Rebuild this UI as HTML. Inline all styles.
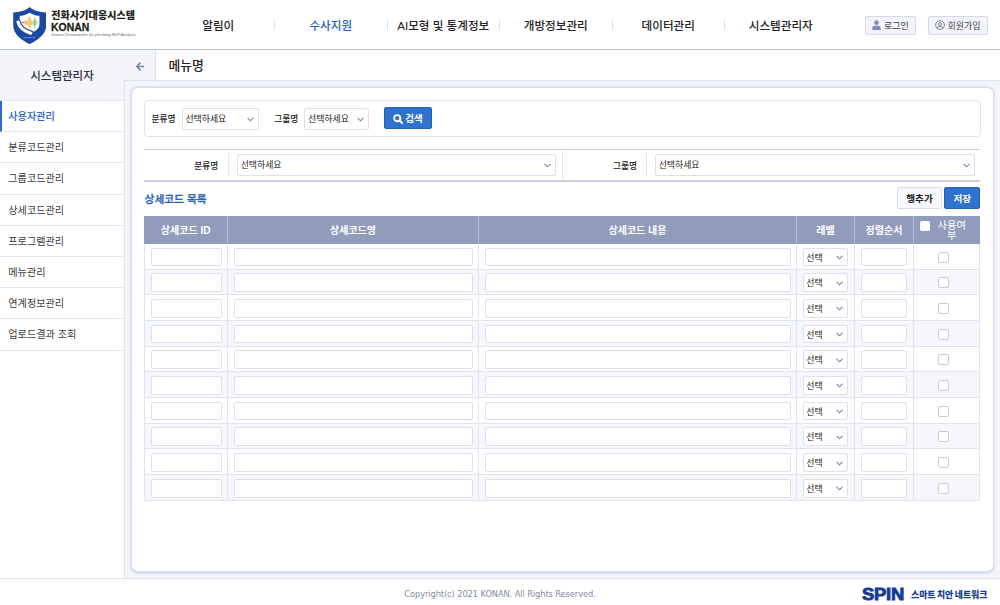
<!DOCTYPE html>
<html lang="ko">
<head>
<meta charset="utf-8">
<title>KONAN</title>
<style>
*{box-sizing:border-box;margin:0;padding:0}
html,body{width:1000px;height:605px;overflow:hidden;background:#fff}
body{position:relative;font-family:"Liberation Sans","Noto Sans CJK KR",sans-serif;font-size:12px;color:#222}
body,div,span{font-family:"Liberation Sans","Noto Sans CJK KR",sans-serif}
.abs{position:absolute}
#hdr{position:absolute;left:0;top:0;width:1000px;height:50px;background:#fff;border-bottom:1px solid #b9c0d8}
.lt1{position:absolute;left:51.3px;top:7.8px;font-size:10px;font-weight:900;color:#231f20;line-height:15.80px;white-space:nowrap;letter-spacing:0.12px}
.lt2{position:absolute;left:51px;top:20.3px;font-size:11px;font-weight:700;color:#231f20;line-height:14px;font-family:"Liberation Sans",sans-serif;transform-origin:0 0;transform:scaleX(.95);-webkit-text-stroke:0.3px #231f20}
.lt3{position:absolute;left:51.5px;top:32px;font-size:4.14px;color:#666;line-height:6px;white-space:nowrap;font-family:"Liberation Sans",sans-serif;font-style:italic;transform-origin:0 0}
.nav{position:absolute;top:1px;height:49px;line-height:50.09px;text-align:center;font-size:11.6px;font-weight:500;color:#222;width:112.5px;white-space:nowrap}
.nav.on{color:#2861bc}
.sep{position:absolute;top:19px;width:1px;height:11px;background:#dde0ea}
.hbtn{position:absolute;top:16px;height:18.8px;border:1px solid #d5d9ea;background:#f3f4fb;border-radius:2px;font-size:9px;line-height:18.62px;color:#444;white-space:nowrap}
.ic{position:absolute}
#side{position:absolute;left:0;top:50px;width:125px;height:528px;background:#fff;border-right:1px solid #dfe2ee}
#sidet{position:absolute;left:0;top:50px;width:155px;height:51px;background:#f4f5fb;border-bottom:1px solid #e4e6f0}
.st{position:absolute;left:0;top:0.8px;width:124px;height:49px;line-height:51.07px;text-align:center;font-size:11.5px;font-weight:500;color:#2a2d3e}
#tbar{position:absolute;left:155px;top:50px;width:845px;height:31px;background:#fff;border-bottom:1px solid #dfe2f0}
.tt{position:absolute;left:13.5px;top:0;line-height:32.30px;font-size:12.8px;font-weight:500;color:#222}
.mi{position:absolute;left:0;width:124px;height:31.2px;border-bottom:1px solid #e4e6f0;line-height:32.33px;padding-left:8.3px;font-size:10.15px;color:#3c3c3c;background:#fff;white-space:nowrap}
.mi.on{color:#2861bc;border-left:2px solid #2f6bc6;padding-left:6.3px;font-weight:500}
#cont{position:absolute;left:124px;top:81px;width:876px;height:497px;background:#f4f5fb;border-left:1px solid #dfe2ee}
#card{position:absolute;left:131px;top:87px;width:863px;height:485px;background:#fff;border:1px solid #d9dcec;border-radius:7px;box-shadow:0 0.5px 2.5px rgba(150,160,205,.55)}
#sbox{position:absolute;left:144px;top:100px;width:837px;height:37px;border:1px solid #dfe2ee;border-radius:4px;background:#fff}
#frow{position:absolute;left:144.3px;top:149.3px;width:835.9px;height:32.6px;border-top:1px solid #c9cee0;border-bottom:2px solid #c9cee0;background:#fff}
.fsep{position:absolute;top:3px;width:1px;height:23px;background:#e4e6f0}
.sel{position:absolute;background:#fff;border:1px solid #dcdfee;border-radius:2px;font-size:8.9px;color:#222;white-space:nowrap}
.inp{position:absolute;background:#fff;border:1px solid #dcdfee;border-radius:2px}
.lab{position:absolute;font-size:8.7px;font-weight:500;color:#222;white-space:nowrap;line-height:17.57px}
.chev{position:absolute;right:4.2px;top:50%;margin-top:-2px}
.btnb{position:absolute;background:#2e73cc;border:1px solid #2462b4;border-radius:2px;color:#fff;font-size:10px;font-weight:500;line-height:21.80px;white-space:nowrap}
.btnw{position:absolute;background:#f7f8fc;border:1px solid #d9dcec;border-radius:2px;color:#222;font-size:9.6px;font-weight:700;line-height:21.33px;text-align:center;white-space:nowrap}
.h2{position:absolute;left:144.6px;top:189.5px;font-size:10.7px;font-weight:500;-webkit-text-stroke:0.3px #2861bc;color:#2861bc;line-height:19.93px;white-space:nowrap}
.th{position:absolute;top:216px;height:27.7px;background:#919cbd;color:#fff;font-size:10px;font-weight:700;text-align:center;line-height:29.80px;border-right:1px solid #b5bcd3;white-space:nowrap}
.row{position:absolute;left:144.3px;width:835.9px;height:25.7px;border-bottom:1px solid #e1e4f0;background:#fff}
.row.alt{background:#f6f7fc}
.vl{position:absolute;top:243.9px;width:1px;height:257.4px;background:#e1e4f0}
.cb{position:absolute;width:11px;height:11px;border:1px solid #c9cbd3;border-radius:2px;background:#fff}
.cbh{position:absolute;left:6.2px;top:4.5px;width:10px;height:10px;border-radius:2px;background:#fff}
.use1{position:absolute;left:23.5px;top:2.3px;line-height:15.85px;font-size:10.3px;font-weight:400}
.use2{position:absolute;left:22.8px;top:12.2px;width:30px;text-align:center;line-height:15.85px;font-size:10.3px;font-weight:400}
#foot{position:absolute;left:0;top:578px;width:1000px;height:27px;background:#fff;border-top:1px solid #e1e4f0}
.cp{position:absolute;left:0;top:0;width:1000px;text-align:center;font-size:8.3px;color:#858aa0;line-height:30px;font-family:"DejaVu Sans","Liberation Sans",sans-serif;letter-spacing:-0.1px}
.spin{position:absolute;left:862.2px;top:3.9px;font-size:17.2px;font-weight:700;color:#173b95;line-height:22px;font-family:"Liberation Sans",sans-serif;letter-spacing:-0.2px;transform-origin:0 0;transform:scaleX(1.07);-webkit-text-stroke:0.9px #173b95}
.spk{position:absolute;left:910.8px;top:8.3px;font-size:9.5px;font-weight:900;color:#173b95;line-height:15.71px;white-space:nowrap;word-spacing:-1px;transform-origin:0 0;transform:scaleX(.932)}
</style>
</head>
<body>
<div id="hdr">
<svg class="abs" style="left:12.7px;top:6.6px" width="33.3" height="37.1" viewBox="62 60 438 488"><path d="M280 60 C232 104 140 133 65 131 L65 300 C65 420 180 500 280 548 C380 500 500 420 500 300 L500 131 C420 133 328 104 280 60Z" fill="#1b48a1"/><path d="M280 135 C240 160 190 176 150 176 L150 290 C150 345 210 385 280 412 C350 385 410 345 410 290 L410 176 C370 176 320 160 280 135Z" fill="#fff"/><path d="M128 258 Q158 362 296 406" fill="none" stroke="#1b48a1" stroke-width="74" stroke-linecap="round"/><path d="M128 258 Q158 362 296 406" fill="none" stroke="#fff" stroke-width="42" stroke-linecap="round"/><g stroke-linecap="round" fill="none"><path d="M190 265 H212" stroke="#e8383d" stroke-width="14"/><path d="M224 238 V292 M236 252 V278" stroke="#f08a2a" stroke-width="10"/><path d="M252 235 V295 M265 212 V318 M279 188 V338 M293 212 V318" stroke="#f6b62e" stroke-width="10"/><path d="M307 240 V290 M320 254 V276" stroke="#c9c544" stroke-width="10"/><path d="M336 230 V300 M350 198 V332 M364 235 V295" stroke="#59b55a" stroke-width="10"/><path d="M378 254 V276 M392 260 V270" stroke="#a9dba6" stroke-width="10"/></g><text x="280" y="474" text-anchor="middle" font-family="Liberation Sans, sans-serif" font-weight="700" font-size="26" letter-spacing="12" fill="#fff">KONAN</text></svg>

<div class="lt1">전화사기대응시스템</div><div class="lt2">KONAN</div><div class="lt3">Konan Overwatcher for phishing NLP Analysis</div>
<div class="nav" style="left:162.0px">알림이</div>
<div class="nav on" style="left:274.5px">수사지원</div>
<div class="sep" style="left:274.0px"></div>
<div class="nav" style="left:387.0px">AI모형 및 통계정보</div>
<div class="sep" style="left:386.5px"></div>
<div class="nav" style="left:499.5px">개방정보관리</div>
<div class="sep" style="left:499.0px"></div>
<div class="nav" style="left:612.0px">데이터관리</div>
<div class="sep" style="left:611.5px"></div>
<div class="nav" style="left:724.5px">시스템관리자</div>
<div class="sep" style="left:724.0px"></div>
<div class="hbtn" style="left:865px;width:51px"><svg class="ic" style="left:6px;top:2.8px" width="9" height="10.4" viewBox="0 0 9 10" preserveAspectRatio="none"><circle cx="4.5" cy="2.6" r="2.3" fill="#7f8bb3"/><path d="M0.3 9.6 V8 Q0.3 5.6 2.6 5.6 H6.4 Q8.7 5.6 8.7 8 V9.6 Z" fill="#7f8bb3"/></svg><span style="position:absolute;left:18px;top:0">로그인</span></div>
<div class="hbtn" style="left:928px;width:60px"><svg class="ic" style="left:5.7px;top:3px" width="10" height="10" viewBox="0 0 10 10"><circle cx="5" cy="5" r="4.4" fill="none" stroke="#666e8a" stroke-width="0.8"/><circle cx="5" cy="4" r="1.5" fill="none" stroke="#666e8a" stroke-width="0.8"/><path d="M2.3 8.2 Q2.6 6.3 5 6.3 Q7.4 6.3 7.7 8.2" fill="none" stroke="#666e8a" stroke-width="0.8"/></svg><span style="position:absolute;left:18.5px;top:0">회원가입</span></div>
</div>
<div id="side"></div>
<div id="sidet"><div class="st">시스템관리자</div><svg class="abs" style="left:136px;top:12px" width="9" height="9" viewBox="0 0 9 9"><path d="M4.4 0.6 L0.9 4.5 L4.4 8.4 M1 4.5 H8.1" fill="none" stroke="#7785ad" stroke-width="1.7"/></svg></div>
<div id="tbar"><div class="tt">메뉴명</div></div>
<div class="abs" style="left:155px;top:50px;width:1px;height:31px;background:#dcdfee"></div><div class="abs" style="left:124px;top:80px;width:32px;height:1px;background:#dcdfee"></div>
<div class="mi on" style="top:101.0px">사용자관리</div>
<div class="mi" style="top:132.2px">분류코드관리</div>
<div class="mi" style="top:163.4px">그룹코드관리</div>
<div class="mi" style="top:194.6px">상세코드관리</div>
<div class="mi" style="top:225.8px">프로그램관리</div>
<div class="mi" style="top:257.0px">메뉴관리</div>
<div class="mi" style="top:288.2px">연계정보관리</div>
<div class="mi" style="top:319.4px">업로드결과 조회</div>
<div id="cont"></div>
<div id="card"></div>
<div id="sbox">
<div class="lab" style="left:6.6px;top:9.7px">분류명</div>
<div class="sel" style="left:36.8px;top:7.2px;width:77.4px;height:21.4px;line-height:21.1px;padding-left:2.6px">선택하세요<svg class="chev" width="7" height="5" viewBox="0 0 7 5"><path d="M0.6 0.8 L3.5 3.8 L6.4 0.8" fill="none" stroke="#7a82a4" stroke-width="1.1"/></svg></div>
<div class="lab" style="left:129.2px;top:9.7px">그룹명</div>
<div class="sel" style="left:159.4px;top:7.2px;width:64.4px;height:21.4px;line-height:21.1px;padding-left:2.6px">선택하세요<svg class="chev" width="7" height="5" viewBox="0 0 7 5"><path d="M0.6 0.8 L3.5 3.8 L6.4 0.8" fill="none" stroke="#7a82a4" stroke-width="1.1"/></svg></div>
<div class="btnb" style="left:238.7px;top:6.2px;width:48.3px;height:22.3px"><svg class="abs" style="left:8.2px;top:6px" width="10" height="10" viewBox="0 0 10 10"><circle cx="4.2" cy="4.2" r="3.1" fill="none" stroke="#fff" stroke-width="1.9"/><path d="M6.5 6.5 L9.2 9.2" stroke="#fff" stroke-width="1.9" stroke-linecap="round"/></svg><span style="position:absolute;left:20.6px;top:0;font-size:9.5px;font-weight:700">검색</span></div>
</div>
<div id="frow">
<div class="lab" style="left:50px;top:7.6px">분류명</div>
<div class="fsep" style="left:83.6px"></div>
<div class="sel" style="left:92.6px;top:4px;width:319.4px;height:21.6px;line-height:21.1px;padding-left:2.8px">선택하세요<svg class="chev" width="7" height="5" viewBox="0 0 7 5"><path d="M0.6 0.8 L3.5 3.8 L6.4 0.8" fill="none" stroke="#7a82a4" stroke-width="1.1"/></svg></div>
<div class="fsep" style="left:418px;top:0;height:30px"></div>
<div class="lab" style="left:468.6px;top:7.6px">그룹명</div>
<div class="fsep" style="left:502px"></div>
<div class="sel" style="left:510.6px;top:4px;width:320px;height:21.6px;line-height:21.1px;padding-left:2.8px">선택하세요<svg class="chev" width="7" height="5" viewBox="0 0 7 5"><path d="M0.6 0.8 L3.5 3.8 L6.4 0.8" fill="none" stroke="#7a82a4" stroke-width="1.1"/></svg></div>
</div>
<div class="h2">상세코드 목록</div>
<div class="btnw" style="left:897px;top:187.4px;width:45px;height:21.6px">행추가</div>
<div class="btnb" style="left:944.2px;top:187.4px;width:36.2px;height:21.6px;text-align:center;font-weight:700;font-size:9.6px">저장</div>
<div class="th" style="left:144.3px;width:83.7px">상세코드 ID</div>
<div class="th" style="left:228.0px;width:251.0px">상세코드명</div>
<div class="th" style="left:479.0px;width:318.0px">상세코드 내용</div>
<div class="th" style="left:797.0px;width:58.0px">레벨</div>
<div class="th" style="left:855.0px;width:59.0px">정렬순서</div>
<div class="th" style="left:914.0px;width:66.2px;border-right:0"><span class="cbh"></span><span class="use1">사용여</span><span class="use2">부</span></div>
<div class="row" style="top:243.9px">
<div class="inp" style="left:7px;top:3.7px;width:70.6px;height:18.7px"></div>
<div class="inp" style="left:90px;top:3.7px;width:239px;height:18.7px"></div>
<div class="inp" style="left:341px;top:3.7px;width:306px;height:18.7px"></div>
<div class="sel" style="left:659px;top:3.7px;width:45px;height:18.7px;line-height:18.6px;padding-left:2px">선택<svg class="chev" width="7" height="5" viewBox="0 0 7 5"><path d="M0.6 0.8 L3.5 3.8 L6.4 0.8" fill="none" stroke="#7a82a4" stroke-width="1.1"/></svg></div>
<div class="inp" style="left:717px;top:3.7px;width:46px;height:18.7px"></div>
<div class="cb" style="left:794px;top:7.7px"></div>
</div>
<div class="row alt" style="top:269.6px">
<div class="inp" style="left:7px;top:3.7px;width:70.6px;height:18.7px"></div>
<div class="inp" style="left:90px;top:3.7px;width:239px;height:18.7px"></div>
<div class="inp" style="left:341px;top:3.7px;width:306px;height:18.7px"></div>
<div class="sel" style="left:659px;top:3.7px;width:45px;height:18.7px;line-height:18.6px;padding-left:2px">선택<svg class="chev" width="7" height="5" viewBox="0 0 7 5"><path d="M0.6 0.8 L3.5 3.8 L6.4 0.8" fill="none" stroke="#7a82a4" stroke-width="1.1"/></svg></div>
<div class="inp" style="left:717px;top:3.7px;width:46px;height:18.7px"></div>
<div class="cb" style="left:794px;top:7.7px"></div>
</div>
<div class="row" style="top:295.3px">
<div class="inp" style="left:7px;top:3.7px;width:70.6px;height:18.7px"></div>
<div class="inp" style="left:90px;top:3.7px;width:239px;height:18.7px"></div>
<div class="inp" style="left:341px;top:3.7px;width:306px;height:18.7px"></div>
<div class="sel" style="left:659px;top:3.7px;width:45px;height:18.7px;line-height:18.6px;padding-left:2px">선택<svg class="chev" width="7" height="5" viewBox="0 0 7 5"><path d="M0.6 0.8 L3.5 3.8 L6.4 0.8" fill="none" stroke="#7a82a4" stroke-width="1.1"/></svg></div>
<div class="inp" style="left:717px;top:3.7px;width:46px;height:18.7px"></div>
<div class="cb" style="left:794px;top:7.7px"></div>
</div>
<div class="row alt" style="top:321.0px">
<div class="inp" style="left:7px;top:3.7px;width:70.6px;height:18.7px"></div>
<div class="inp" style="left:90px;top:3.7px;width:239px;height:18.7px"></div>
<div class="inp" style="left:341px;top:3.7px;width:306px;height:18.7px"></div>
<div class="sel" style="left:659px;top:3.7px;width:45px;height:18.7px;line-height:18.6px;padding-left:2px">선택<svg class="chev" width="7" height="5" viewBox="0 0 7 5"><path d="M0.6 0.8 L3.5 3.8 L6.4 0.8" fill="none" stroke="#7a82a4" stroke-width="1.1"/></svg></div>
<div class="inp" style="left:717px;top:3.7px;width:46px;height:18.7px"></div>
<div class="cb" style="left:794px;top:7.7px"></div>
</div>
<div class="row" style="top:346.7px">
<div class="inp" style="left:7px;top:3.7px;width:70.6px;height:18.7px"></div>
<div class="inp" style="left:90px;top:3.7px;width:239px;height:18.7px"></div>
<div class="inp" style="left:341px;top:3.7px;width:306px;height:18.7px"></div>
<div class="sel" style="left:659px;top:3.7px;width:45px;height:18.7px;line-height:18.6px;padding-left:2px">선택<svg class="chev" width="7" height="5" viewBox="0 0 7 5"><path d="M0.6 0.8 L3.5 3.8 L6.4 0.8" fill="none" stroke="#7a82a4" stroke-width="1.1"/></svg></div>
<div class="inp" style="left:717px;top:3.7px;width:46px;height:18.7px"></div>
<div class="cb" style="left:794px;top:7.7px"></div>
</div>
<div class="row alt" style="top:372.4px">
<div class="inp" style="left:7px;top:3.7px;width:70.6px;height:18.7px"></div>
<div class="inp" style="left:90px;top:3.7px;width:239px;height:18.7px"></div>
<div class="inp" style="left:341px;top:3.7px;width:306px;height:18.7px"></div>
<div class="sel" style="left:659px;top:3.7px;width:45px;height:18.7px;line-height:18.6px;padding-left:2px">선택<svg class="chev" width="7" height="5" viewBox="0 0 7 5"><path d="M0.6 0.8 L3.5 3.8 L6.4 0.8" fill="none" stroke="#7a82a4" stroke-width="1.1"/></svg></div>
<div class="inp" style="left:717px;top:3.7px;width:46px;height:18.7px"></div>
<div class="cb" style="left:794px;top:7.7px"></div>
</div>
<div class="row" style="top:398.1px">
<div class="inp" style="left:7px;top:3.7px;width:70.6px;height:18.7px"></div>
<div class="inp" style="left:90px;top:3.7px;width:239px;height:18.7px"></div>
<div class="inp" style="left:341px;top:3.7px;width:306px;height:18.7px"></div>
<div class="sel" style="left:659px;top:3.7px;width:45px;height:18.7px;line-height:18.6px;padding-left:2px">선택<svg class="chev" width="7" height="5" viewBox="0 0 7 5"><path d="M0.6 0.8 L3.5 3.8 L6.4 0.8" fill="none" stroke="#7a82a4" stroke-width="1.1"/></svg></div>
<div class="inp" style="left:717px;top:3.7px;width:46px;height:18.7px"></div>
<div class="cb" style="left:794px;top:7.7px"></div>
</div>
<div class="row alt" style="top:423.8px">
<div class="inp" style="left:7px;top:3.7px;width:70.6px;height:18.7px"></div>
<div class="inp" style="left:90px;top:3.7px;width:239px;height:18.7px"></div>
<div class="inp" style="left:341px;top:3.7px;width:306px;height:18.7px"></div>
<div class="sel" style="left:659px;top:3.7px;width:45px;height:18.7px;line-height:18.6px;padding-left:2px">선택<svg class="chev" width="7" height="5" viewBox="0 0 7 5"><path d="M0.6 0.8 L3.5 3.8 L6.4 0.8" fill="none" stroke="#7a82a4" stroke-width="1.1"/></svg></div>
<div class="inp" style="left:717px;top:3.7px;width:46px;height:18.7px"></div>
<div class="cb" style="left:794px;top:7.7px"></div>
</div>
<div class="row" style="top:449.5px">
<div class="inp" style="left:7px;top:3.7px;width:70.6px;height:18.7px"></div>
<div class="inp" style="left:90px;top:3.7px;width:239px;height:18.7px"></div>
<div class="inp" style="left:341px;top:3.7px;width:306px;height:18.7px"></div>
<div class="sel" style="left:659px;top:3.7px;width:45px;height:18.7px;line-height:18.6px;padding-left:2px">선택<svg class="chev" width="7" height="5" viewBox="0 0 7 5"><path d="M0.6 0.8 L3.5 3.8 L6.4 0.8" fill="none" stroke="#7a82a4" stroke-width="1.1"/></svg></div>
<div class="inp" style="left:717px;top:3.7px;width:46px;height:18.7px"></div>
<div class="cb" style="left:794px;top:7.7px"></div>
</div>
<div class="row alt" style="top:475.2px">
<div class="inp" style="left:7px;top:3.7px;width:70.6px;height:18.7px"></div>
<div class="inp" style="left:90px;top:3.7px;width:239px;height:18.7px"></div>
<div class="inp" style="left:341px;top:3.7px;width:306px;height:18.7px"></div>
<div class="sel" style="left:659px;top:3.7px;width:45px;height:18.7px;line-height:18.6px;padding-left:2px">선택<svg class="chev" width="7" height="5" viewBox="0 0 7 5"><path d="M0.6 0.8 L3.5 3.8 L6.4 0.8" fill="none" stroke="#7a82a4" stroke-width="1.1"/></svg></div>
<div class="inp" style="left:717px;top:3.7px;width:46px;height:18.7px"></div>
<div class="cb" style="left:794px;top:7.7px"></div>
</div>
<div class="vl" style="left:227.0px"></div>
<div class="vl" style="left:478.0px"></div>
<div class="vl" style="left:796.0px"></div>
<div class="vl" style="left:854.0px"></div>
<div class="vl" style="left:913.0px"></div>
<div class="vl" style="left:144.3px"></div><div class="vl" style="left:979.2px"></div>
<div id="foot"><div class="cp">Copyright(c) 2021 KONAN. All Rights Reserved.</div><div class="spin">SPIN</div><div class="spk">스마트 치안 네트워크</div></div>
</body>
</html>
